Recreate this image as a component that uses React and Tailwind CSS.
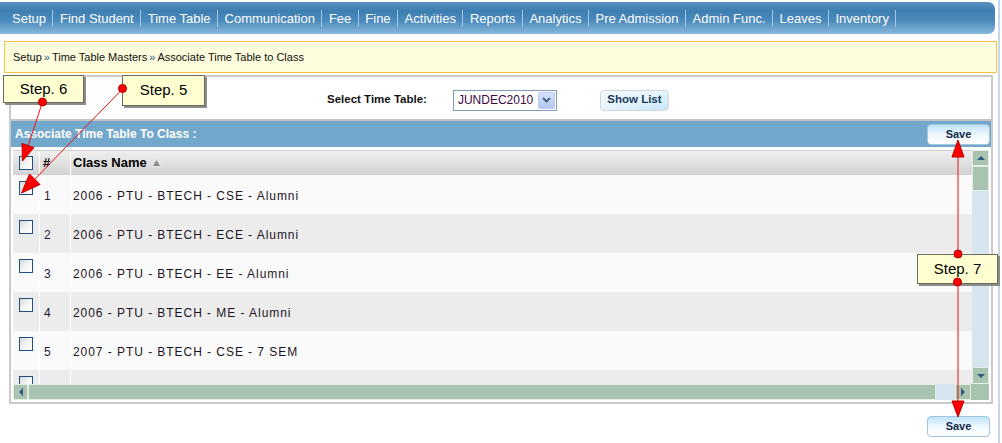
import React from 'react';

const navItems = [
  'Setup',
  'Find Student',
  'Time Table',
  'Communication',
  'Fee',
  'Fine',
  'Activities',
  'Reports',
  'Analytics',
  'Pre Admission',
  'Admin Func.',
  'Leaves',
  'Inventory',
];

const classes = [
  '2006 - PTU - BTECH - CSE - Alumni',
  '2006 - PTU - BTECH - ECE - Alumni',
  '2006 - PTU - BTECH - EE - Alumni',
  '2006 - PTU - BTECH - ME - Alumni',
  '2007 - PTU - BTECH - CSE - 7 SEM',
  '',
];

const CheckBox = () => (
  <span className="block w-[14px] h-[14px] border border-[#1f4f7e] bg-gradient-to-br from-[#d8d8d8] via-[#f4f4f4] to-white" />
);

const ScrollBtn = ({ dir }) => (
  <div className="w-full h-full bg-[#a8c4b0] border border-[#e4eee4] flex items-center justify-center">
    <svg width="8" height="8" viewBox="0 0 8 8">
      {dir === 'up' && <path d="M0 6 L4 2 L8 6 Z" fill="#2c5a78" />}
      {dir === 'down' && <path d="M0 2 L4 6 L8 2 Z" fill="#2c5a78" />}
      {dir === 'left' && <path d="M6 0 L2 4 L6 8 Z" fill="#2c5a78" />}
      {dir === 'right' && <path d="M2 0 L6 4 L2 8 Z" fill="#2c5a78" />}
    </svg>
  </div>
);

const SaveButton = () => (
  <button className="w-[63px] h-[21px] rounded-[4px] border border-[#a4c6dc] bg-gradient-to-b from-[#bfe2f8] via-[#eef8fe] to-white text-[11px] font-bold text-[#12294a] leading-none">
    Save
  </button>
);

const Callout = ({ className, children }) => (
  <div
    className={`absolute bg-[#ffffd2] border border-[#6b6b5c] shadow-[2px_2px_0_#8c8c8c] flex items-center justify-center text-[15px] text-black ${className}`}
  >
    {children}
  </div>
);

export default function App() {
  return (
    <div className="relative w-[1002px] h-[443px] bg-white overflow-hidden font-['Liberation_Sans',Arial,sans-serif] text-black">
      <div className="flex">
        <div className="w-[998px]">
          {/* top menu */}
          <div className="mt-[2px] w-[995px] h-[32px] rounded-r-[7px] bg-[linear-gradient(#5791c1,#3d7eb1_28%,#4d8bbd_60%,#86b8dc)] flex items-center pl-[5.5px] pt-[1px]">
            {navItems.map((item) => (
              <React.Fragment key={item}>
                <span className="px-[6.5px] text-[13px] text-white whitespace-nowrap">{item}</span>
                <span className="w-px h-[17px] bg-[#a4c6e2]" />
              </React.Fragment>
            ))}
          </div>

          {/* breadcrumb */}
          <div className="mt-[7px] ml-[4px] w-[993px] h-[32px] border border-[#f7c247] bg-[#fdfcdc] flex items-center pl-[8px] text-[11px] text-[#111]">
            Setup <span className="mx-[2px] text-[#2b5b8a]">»</span> Time Table Masters{' '}
            <span className="mx-[2px] text-[#2b5b8a]">»</span> Associate Time Table to Class
          </div>

          {/* main panel */}
          <div className="mt-[2px] ml-[9px] w-[984px] border-2 border-[#cacaca] pb-[2px]">
            <div className="h-[42px] flex items-center pl-[316px] pt-[4px]">
              <span className="text-[11.5px] font-bold text-[#111]">Select Time Table:</span>
              <div className="ml-[26px] w-[104px] h-[21px] border border-[#7f9db9] bg-white flex items-center justify-between pl-[4px] pr-[1px]">
                <span className="text-[12px] text-[#3b0a45]">JUNDEC2010</span>
                <span className="w-[17px] h-[17px] rounded-[2px] border border-[#b9c9ef] bg-gradient-to-b from-[#d6e2fb] to-[#b2c6f1] flex items-center justify-center">
                  <svg width="9" height="6" viewBox="0 0 9 6">
                    <path d="M1 1 L4.5 4.5 L8 1" stroke="#4d6185" strokeWidth="2" fill="none" />
                  </svg>
                </span>
              </div>
              <button className="ml-[43px] w-[69px] h-[21px] rounded-[4px] border border-[#d2d6da] bg-gradient-to-br from-[#f4fafe] via-[#e6f4fc] to-[#c8e6f8] text-[11.5px] font-bold text-[#1a3a5c] leading-none">
                Show List
              </button>
            </div>

            <div className="h-[2px] bg-[#c4c4c4]" />
            <div className="h-[26px] bg-[#72a8cc] flex items-center justify-between pl-[4px] pr-[1px]">
              <span className="text-[12px] font-bold text-white">Associate Time Table To Class :</span>
              <SaveButton />
            </div>
            <div className="h-[3px]" />

            {/* grid */}
            <div className="mx-[2px]">
              <div className="flex h-[234px]">
                <div className="w-[959px] overflow-hidden">
                  <div className="flex h-[25px] border-t border-[#cfcfcf] bg-gradient-to-b from-[#efefef] to-[#d3d3d3]">
                    <div className="w-[27px] border-r border-white flex justify-center pt-[5px]">
                      <CheckBox />
                    </div>
                    <div className="w-[31px] border-r border-white flex items-center pl-[3px] text-[13px] font-bold">#</div>
                    <div className="flex-1 flex items-center pl-[2px] text-[13px] font-bold">
                      Class Name
                      <svg className="ml-[5px]" width="9" height="8" viewBox="0 0 9 8">
                        <rect width="9" height="8" fill="#e4e4e4" />
                        <path d="M1 7 L4.5 1 L8 7 Z" fill="#8a8a8a" />
                      </svg>
                    </div>
                  </div>
                  {classes.map((name, i) => (
                    <div key={i} className={`flex h-[39px] ${i % 2 === 0 ? 'bg-[#fafafa]' : 'bg-[#ececec]'}`}>
                      <div className="w-[27px] border-r border-white flex justify-center pt-[6px]">
                        <CheckBox />
                      </div>
                      <div className="w-[31px] border-r border-white flex items-center pl-[4px] pt-[2px] text-[12px] text-[#2a1a3a]">
                        {name ? i + 1 : ''}
                      </div>
                      <div className="flex-1 flex items-center pl-[2px] pt-[2px] text-[12px] tracking-[0.95px] text-[#1c1424]">
                        {name}
                      </div>
                    </div>
                  ))}
                </div>
                <div className="w-[17px] flex flex-col bg-[#d6e5ef]">
                  <div className="h-[16px]">
                    <ScrollBtn dir="up" />
                  </div>
                  <div className="h-[25px] bg-[#a8c4b0] border border-[#e4eee4]" />
                  <div className="flex-1" />
                  <div className="h-[17px]">
                    <ScrollBtn dir="down" />
                  </div>
                </div>
              </div>
              <div className="flex h-[16px]">
                <div className="w-[15px]">
                  <ScrollBtn dir="left" />
                </div>
                <div className="w-[908px] bg-[#a8c4b0] border border-[#e4eee4]" />
                <div className="w-[19px] bg-[#d6e5ef]" />
                <div className="w-[16px]">
                  <ScrollBtn dir="right" />
                </div>
                <div className="w-[18px] bg-[#a8c4b0]" />
              </div>
            </div>
          </div>

          <div className="mt-[9px] ml-[927px]">
            <SaveButton />
          </div>
        </div>
        <div className="w-[2px] h-[443px] bg-[#c2d8ee]" />
      </div>

      {/* callouts */}
      <Callout className="left-[3px] top-[75px] w-[81px] h-[28px]">Step. 6</Callout>
      <Callout className="left-[122px] top-[75px] w-[83px] h-[31px]">Step. 5</Callout>
      <Callout className="left-[917px] top-[254px] w-[81px] h-[30px]">Step. 7</Callout>

      <svg className="absolute left-0 top-0 pointer-events-none" width="1002" height="443" viewBox="0 0 1002 443">
        <g stroke="#f01010" strokeWidth="1" fill="#ff0000">
          <line x1="42.5" y1="102" x2="28" y2="146" />
          <path d="M22.5 161 L22 143.5 L34 147.5 Z" stroke="#c00000" />
          <line x1="122.5" y1="89" x2="34" y2="180" />
          <path d="M21.5 193 L29.5 174 L40 184.5 Z" stroke="#c00000" />
          <line x1="958" y1="254" x2="958" y2="157" />
          <path d="M958 140 L952 157 L964 157 Z" stroke="#c00000" />
          <line x1="958" y1="282" x2="958" y2="401" />
          <path d="M958 417 L952 401 L964 401 Z" stroke="#c00000" />
          <circle cx="42.5" cy="102" r="4" stroke="#b00000" />
          <circle cx="122.5" cy="88.5" r="4" stroke="#b00000" />
          <circle cx="958" cy="254" r="4" stroke="#b00000" />
          <circle cx="957.5" cy="282" r="4" stroke="#b00000" />
        </g>
      </svg>
    </div>
  );
}
